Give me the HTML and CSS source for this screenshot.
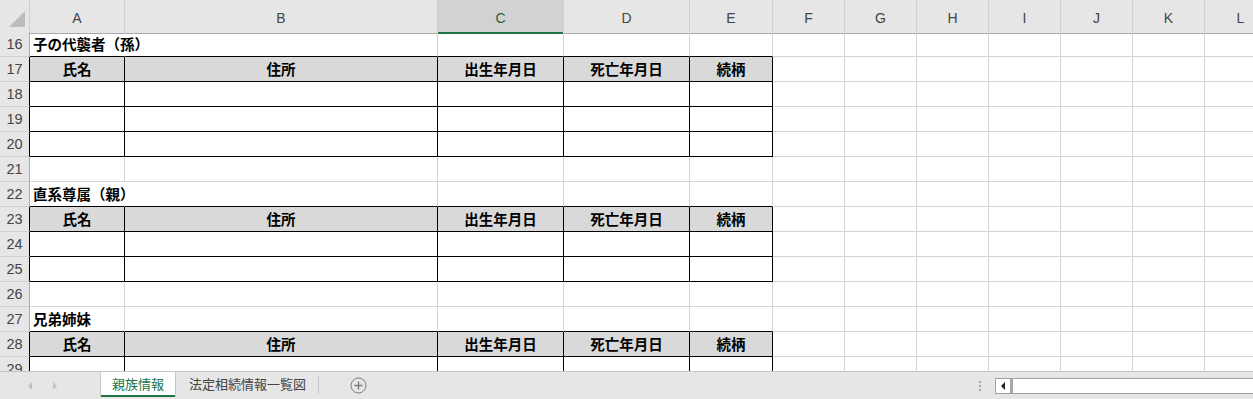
FILE: index.html
```html
<!DOCTYPE html>
<html lang="ja">
<head>
  <meta charset="UTF-8" />
  <title>親族情報</title>
  <link rel="stylesheet" href="styles.css">
</head>
<body>
  <div class="sheet">
    <div class="grid">
      <div class="row colhead">
        <div class="corner">
          <svg width="30" height="31" viewBox="0 0 30 31"><polygon points="25,11 25,27 9,27" fill="#bdbdbd"/></svg>
        </div>
        <div class="ch">A</div>
        <div class="ch">B</div>
        <div class="ch sel">C</div>
        <div class="ch">D</div>
        <div class="ch">E</div>
        <div class="ch">F</div>
        <div class="ch">G</div>
        <div class="ch">H</div>
        <div class="ch">I</div>
        <div class="ch">J</div>
        <div class="ch">K</div>
        <div class="ch">L</div>
      </div>

      <!-- 子の代襲者 -->
      <div class="row">
        <div class="rh">16</div>
        <div class="c tt ttl nr">子の代襲者（孫）</div>
        <div class="c tt"></div><div class="c tt"></div><div class="c tt"></div><div class="c tt"></div>
        <div class="c"></div><div class="c"></div><div class="c"></div><div class="c"></div><div class="c"></div><div class="c"></div><div class="c"></div>
      </div>
      <div class="row">
        <div class="rh tb">17</div>
        <div class="c t th">氏名</div><div class="c t th">住所</div><div class="c t th">出生年月日</div><div class="c t th">死亡年月日</div><div class="c t th">続柄</div>
        <div class="c"></div><div class="c"></div><div class="c"></div><div class="c"></div><div class="c"></div><div class="c"></div><div class="c"></div>
      </div>
      <div class="row">
        <div class="rh tb">18</div>
        <div class="c t"></div><div class="c t"></div><div class="c t"></div><div class="c t"></div><div class="c t"></div>
        <div class="c"></div><div class="c"></div><div class="c"></div><div class="c"></div><div class="c"></div><div class="c"></div><div class="c"></div>
      </div>
      <div class="row">
        <div class="rh tb">19</div>
        <div class="c t"></div><div class="c t"></div><div class="c t"></div><div class="c t"></div><div class="c t"></div>
        <div class="c"></div><div class="c"></div><div class="c"></div><div class="c"></div><div class="c"></div><div class="c"></div><div class="c"></div>
      </div>
      <div class="row">
        <div class="rh tb">20</div>
        <div class="c t"></div><div class="c t"></div><div class="c t"></div><div class="c t"></div><div class="c t"></div>
        <div class="c"></div><div class="c"></div><div class="c"></div><div class="c"></div><div class="c"></div><div class="c"></div><div class="c"></div>
      </div>
      <div class="row">
        <div class="rh">21</div>
        <div class="c"></div><div class="c"></div><div class="c"></div><div class="c"></div><div class="c"></div>
        <div class="c"></div><div class="c"></div><div class="c"></div><div class="c"></div><div class="c"></div><div class="c"></div><div class="c"></div>
      </div>

      <!-- 直系尊属 -->
      <div class="row">
        <div class="rh">22</div>
        <div class="c tt ttl nr">直系尊属（親）</div>
        <div class="c tt"></div><div class="c tt"></div><div class="c tt"></div><div class="c tt"></div>
        <div class="c"></div><div class="c"></div><div class="c"></div><div class="c"></div><div class="c"></div><div class="c"></div><div class="c"></div>
      </div>
      <div class="row">
        <div class="rh tb">23</div>
        <div class="c t th">氏名</div><div class="c t th">住所</div><div class="c t th">出生年月日</div><div class="c t th">死亡年月日</div><div class="c t th">続柄</div>
        <div class="c"></div><div class="c"></div><div class="c"></div><div class="c"></div><div class="c"></div><div class="c"></div><div class="c"></div>
      </div>
      <div class="row">
        <div class="rh tb">24</div>
        <div class="c t"></div><div class="c t"></div><div class="c t"></div><div class="c t"></div><div class="c t"></div>
        <div class="c"></div><div class="c"></div><div class="c"></div><div class="c"></div><div class="c"></div><div class="c"></div><div class="c"></div>
      </div>
      <div class="row">
        <div class="rh tb">25</div>
        <div class="c t"></div><div class="c t"></div><div class="c t"></div><div class="c t"></div><div class="c t"></div>
        <div class="c"></div><div class="c"></div><div class="c"></div><div class="c"></div><div class="c"></div><div class="c"></div><div class="c"></div>
      </div>
      <div class="row">
        <div class="rh">26</div>
        <div class="c"></div><div class="c"></div><div class="c"></div><div class="c"></div><div class="c"></div>
        <div class="c"></div><div class="c"></div><div class="c"></div><div class="c"></div><div class="c"></div><div class="c"></div><div class="c"></div>
      </div>

      <!-- 兄弟姉妹 -->
      <div class="row">
        <div class="rh">27</div>
        <div class="c tt ttl">兄弟姉妹</div>
        <div class="c tt"></div><div class="c tt"></div><div class="c tt"></div><div class="c tt"></div>
        <div class="c"></div><div class="c"></div><div class="c"></div><div class="c"></div><div class="c"></div><div class="c"></div><div class="c"></div>
      </div>
      <div class="row">
        <div class="rh tb">28</div>
        <div class="c t th">氏名</div><div class="c t th">住所</div><div class="c t th">出生年月日</div><div class="c t th">死亡年月日</div><div class="c t th">続柄</div>
        <div class="c"></div><div class="c"></div><div class="c"></div><div class="c"></div><div class="c"></div><div class="c"></div><div class="c"></div>
      </div>
      <div class="row">
        <div class="rh tb">29</div>
        <div class="c t"></div><div class="c t"></div><div class="c t"></div><div class="c t"></div><div class="c t"></div>
        <div class="c"></div><div class="c"></div><div class="c"></div><div class="c"></div><div class="c"></div><div class="c"></div><div class="c"></div>
      </div>
    </div>

    <div class="tabbar">
      <div class="nav">
        <span class="arrow left"></span>
        <span class="arrow right"></span>
      </div>
      <div class="tab active">親族情報</div>
      <div class="tab">法定相続情報一覧図</div>
      <div class="tabsep"></div>
      <div class="addsheet">
        <svg width="17" height="17" viewBox="0 0 17 17"><circle cx="8.5" cy="8.5" r="7.5" fill="none" stroke="#7a7a7a" stroke-width="1"/><path d="M8.5 4.5v8M4.5 8.5h8" stroke="#7a7a7a" stroke-width="1.3"/></svg>
      </div>
      <div class="spacer"></div>
      <div class="grip"><i></i><i></i><i></i></div>
      <div class="hscroll">
        <div class="sbtn"><span class="tri"></span></div>
        <div class="thumb"></div>
      </div>
    </div>
  </div>
</body>
</html>
```

FILE: styles.css
```css
body {
  margin: 0;
  background: #fff;
  overflow: hidden;
  font-family: "Noto Sans CJK JP", "Noto Sans", sans-serif;
}

.sheet {
  width: 1253px;
  height: 399px;
  display: flex;
  flex-direction: column;
  overflow: hidden;
}

.grid {
  height: 371px;
  overflow: hidden;
  flex: none;
}

.row {
  display: grid;
  grid-template-columns: 30px 95px 313px 126px 126px 83px 72px 72px 72px 72px 72px 72px 72px;
  height: 25px;
}

.row.colhead {
  height: 32px;
}

/* column headers */
.corner,
.ch {
  box-sizing: border-box;
  background: #e6e6e6;
  border-right: 1px solid #cfcfcf;
  border-bottom: 1px solid #ababab;
}

.corner svg {
  display: block;
}

.ch {
  font-family: "Liberation Sans", Arial, sans-serif;
  font-size: 14px;
  color: #444;
  text-align: center;
  line-height: 30px;
  padding-top: 3px;
}

.ch.sel {
  background: #d2d2d2;
  color: #2e5d3e;
  border-bottom-color: #217346;
  box-shadow: inset 0 -1px #217346;
}

/* row headers */
.rh {
  box-sizing: border-box;
  background: #e6e6e6;
  border-right: 1px solid #ababab;
  border-bottom: 1px solid #cfcfcf;
  font-family: "Liberation Sans", Arial, sans-serif;
  font-size: 14.5px;
  color: #444;
  text-align: center;
  line-height: 24px;
}

.rh.tb {
  border-right-color: #000;
}

/* cells */
.c {
  box-sizing: border-box;
  border-right: 1px solid #d4d4d4;
  border-bottom: 1px solid #d4d4d4;
  font-size: 14.5px;
  line-height: 24px;
  color: #000;
  white-space: nowrap;
  overflow: visible;
}

.c.nr {
  border-right-color: transparent;
}

.c.tt {
  border-bottom-color: #000;
}

.c.t {
  border-right-color: #000;
  border-bottom-color: #000;
}

.c.ttl {
  font-weight: 700;
  padding-left: 3px;
}

.c.th {
  background: #d9d9d9;
  font-weight: 700;
  text-align: center;
}

/* sheet tabs */
.tabbar {
  height: 28px;
  box-sizing: border-box;
  border-top: 1px solid #c6c6c6;
  background: #e6e6e6;
  display: flex;
  align-items: stretch;
  flex: none;
}

.nav {
  width: 100px;
  display: flex;
  align-items: center;
  gap: 21px;
  padding-left: 28px;
  box-sizing: border-box;
}

.arrow {
  width: 0;
  height: 0;
  border-top: 4px solid transparent;
  border-bottom: 4px solid transparent;
}

.arrow.left {
  border-right: 4px solid #c2c2c2;
}

.arrow.right {
  border-left: 4px solid #c2c2c2;
}

.tab {
  font-size: 13px;
  color: #444;
  line-height: 26px;
  padding: 0 12px 0 13px;
  margin-top: -1px;
}

.tab.active {
  width: 76px;
  height: 26px;
  box-sizing: border-box;
  padding: 0;
  text-align: center;
  background: #fff;
  color: #217346;
  border-left: 1px solid #c6c6c6;
  border-right: 1px solid #c6c6c6;
  border-top: 1px solid #c6c6c6;
  line-height: 23px;
  box-shadow: inset 0 -2px #217346;
}

.tabsep {
  width: 1px;
  margin: 4px 0 5px;
  background: #c6c6c6;
}

.addsheet {
  padding: 5px 0 0 31px;
}

.addsheet svg {
  display: block;
}

.spacer {
  flex: 1;
}

.grip {
  display: flex;
  flex-direction: column;
  justify-content: center;
  gap: 2px;
  width: 3px;
  margin-right: 13px;
}

.grip i {
  display: block;
  width: 2px;
  height: 2px;
  background: #a6a6a6;
}

.hscroll {
  width: 258px;
  height: 16px;
  margin-top: 6px;
  box-sizing: border-box;
  border: 1px solid #a0a0a0;
  border-right: none;
  background: #fff;
  display: flex;
}

.sbtn {
  width: 14px;
  display: flex;
  align-items: center;
  justify-content: center;
  border-right: 3px solid #a8a8a8;
}

.tri {
  width: 0;
  height: 0;
  border-top: 4px solid transparent;
  border-bottom: 4px solid transparent;
  border-right: 4px solid #222;
}

.thumb {
  flex: 1;
}
```
